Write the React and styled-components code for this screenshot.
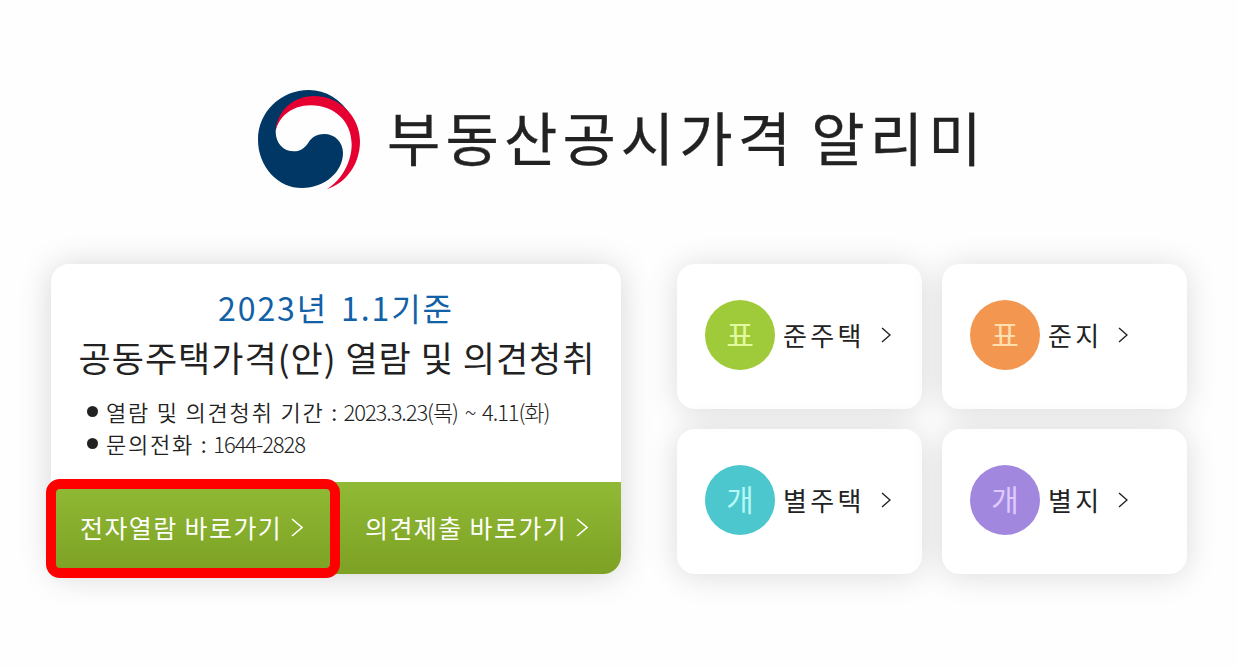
import React from "react";
import styled, { createGlobalStyle } from "styled-components";

const App = () => {
	return (
		<>
			<GlobalStyle />
			<PageWrapper>
				<Header>
					<Emblem />
					<Title>부동산공시가격 알리미</Title>
				</Header>
				<Content>
					<NoticeCard>
						<NoticeBody>
							<NoticeDate>2023년 1.1기준</NoticeDate>
							<NoticeTitle>공동주택가격(안) 열람 및 의견청취</NoticeTitle>
							<InfoList>
								<InfoItem>
									열람 및 의견청취 기간 : <InfoValue>2023.3.23(목) ~ 4.11(화)</InfoValue>
								</InfoItem>
								<InfoItem>
									문의전화 : <InfoValue>1644-2828</InfoValue>
								</InfoItem>
							</InfoList>
						</NoticeBody>
						<NoticeActions>
							<ActionButton>
								전자열람 바로가기
								<Chevron width={12} height={19} stroke={1.6} />
								<Highlight />
							</ActionButton>
							<ActionButton>
								의견제출 바로가기
								<Chevron width={12} height={19} stroke={1.6} />
							</ActionButton>
						</NoticeActions>
					</NoticeCard>
					<MenuGrid>
						{menus.map(({ badge, label, color, badgeText }) => (
							<MenuCard key={color}>
								<Badge color={color} $text={badgeText}>
									{badge}
								</Badge>
								<MenuLabel>{label}</MenuLabel>
								<Chevron width={10} height={16} stroke={1.4} />
							</MenuCard>
						))}
					</MenuGrid>
				</Content>
			</PageWrapper>
		</>
	);
};

export default App;

const menus = [
	{ badge: "표", label: "준주택", color: "#9fca3a", badgeText: "#e2fa9e" },
	{ badge: "표", label: "준지", color: "#f39650", badgeText: "#ffdfae" },
	{ badge: "개", label: "별주택", color: "#4bc7cd", badgeText: "#b5f8f5" },
	{ badge: "개", label: "별지", color: "#a287df", badgeText: "#dfc9ff" },
];

const Emblem = () => (
	<svg width="102" height="100" viewBox="54 59 306 300">
		<path
			fill="#003764"
			d="M334 138C304 87 257 59 207 59C122 59 54 125 54 208C54 290 115 353 186 353C256 353 309 303 309 248C309 215 285 191 252 191C228 191 215 202 205 217C192 236 178 243 162 243C130 243 107 218 107 184C112 132 158 92 222 90Z"
		/>
		<path
			fill="#e60031"
			d="M107 184C110 122 160 77 222 77C300 77 360 140 360 213C360 285 315 340 260 357C305 330 335 275 335 222C335 155 285 105 212 105C155 105 115 140 107 184Z"
		/>
	</svg>
);

const Chevron = ({ width, height, stroke }) => (
	<svg width={width} height={height} viewBox={`0 0 ${width} ${height}`} fill="none">
		<path
			d={`M1 1L${width - 1} ${height / 2}L1 ${height - 1}`}
			stroke="currentColor"
			strokeWidth={stroke}
		/>
	</svg>
);

const GlobalStyle = createGlobalStyle`
	* {
		box-sizing: border-box;
		margin: 0;
		padding: 0;
	}

	body {
		background-color: #fefefe;
		font-family: "Noto Sans CJK KR", sans-serif;
		color: #222;
	}
`;

const PageWrapper = styled.div`
	width: 1237px;
	height: 668px;
	overflow: hidden;
	display: flex;
	flex-direction: column;
`;

const Header = styled.header`
	height: 264px;
	padding: 90px 0 0 258px;
	display: flex;
	align-items: flex-start;
	gap: 27px;
`;

const Title = styled.h1`
	font-size: 58px;
	font-weight: 400;
	line-height: 92px;
	letter-spacing: 5.1px;
	word-spacing: -3px;
	white-space: nowrap;
	-webkit-text-stroke: 0.3px #222;
`;

const Content = styled.main`
	display: flex;
	gap: 56px;
	padding-left: 51px;
`;

const NoticeCard = styled.section`
	width: 570px;
	height: 310px;
	display: flex;
	flex-direction: column;
	border-radius: 18px;
	background-color: #fff;
	box-shadow: 0 2px 32px rgba(0, 0, 0, 0.17);
`;

const NoticeBody = styled.div`
	height: 218px;
	padding-top: 18px;
	display: flex;
	flex-direction: column;
	align-items: center;
	white-space: nowrap;
`;

const NoticeDate = styled.p`
	font-size: 32px;
	line-height: 50px;
	letter-spacing: 1.9px;
	word-spacing: 4px;
	color: #1261a6;
`;

const NoticeTitle = styled.h2`
	padding-left: 2px;
	font-size: 35px;
	font-weight: 400;
	line-height: 50px;
	letter-spacing: 1px;
`;

const InfoList = styled.ul`
	align-self: stretch;
	padding: 13px 0 0 36px;
	list-style: none;
`;

const InfoItem = styled.li`
	display: flex;
	align-items: center;
	height: 32px;
	font-size: 22px;
	line-height: 28px;
	letter-spacing: 1.8px;
	font-weight: 350;
	white-space: pre;

	&::before {
		content: "";
		width: 11px;
		height: 11px;
		margin-right: 8px;
		border-radius: 50%;
		background-color: #222;
	}

	& > * {
		padding-bottom: 1px;
	}
`;

const InfoValue = styled.span`
	margin-left: -2px;
	font-weight: 200;
	letter-spacing: -1.1px;
	word-spacing: 3px;
`;

const NoticeActions = styled.div`
	height: 92px;
	display: grid;
	grid-template-columns: 285px 285px;
	border-radius: 0 0 18px 18px;
	background: linear-gradient(#90ba35, #7da124);
`;

const ActionButton = styled.a`
	position: relative;
	display: flex;
	align-items: center;
	gap: 9px;
	padding: 0 0 2px 29px;
	color: #fff;
	font-size: 25px;
	line-height: 88px;
	letter-spacing: 1.4px;
	white-space: nowrap;
	cursor: pointer;
`;

const Highlight = styled.span`
	position: absolute;
	top: -3px;
	left: -5px;
	width: 294px;
	height: 99px;
	border: 10px solid #fe0000;
	border-radius: 14px;
`;

const MenuGrid = styled.nav`
	display: grid;
	grid-template-columns: 245px 245px;
	grid-template-rows: 145px 145px;
	gap: 20px;
`;

const MenuCard = styled.a`
	display: flex;
	align-items: center;
	padding: 0 0 3px 28px;
	border-radius: 18px;
	background-color: #fff;
	box-shadow: 0 2px 32px rgba(0, 0, 0, 0.14);
	cursor: pointer;
`;

const Badge = styled.span`
	width: 70px;
	height: 70px;
	border-radius: 50%;
	background-color: ${({ color }) => color};
	color: ${({ $text }) => $text};
	font-size: 30px;
	line-height: 66px;
	text-align: center;
`;

const MenuLabel = styled.span`
	margin: 0 16px 0 8px;
	padding-bottom: 2px;
	font-size: 26px;
	letter-spacing: 3.3px;
`;
